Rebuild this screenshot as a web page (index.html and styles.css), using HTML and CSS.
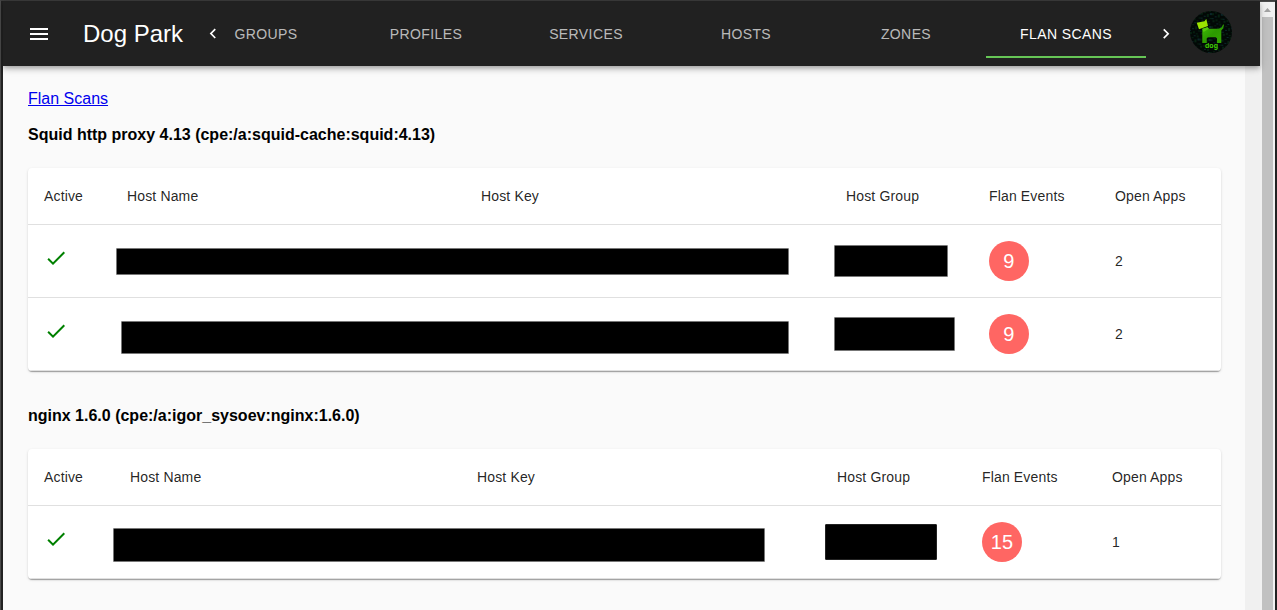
FILE: index.html
```html
<!DOCTYPE html>
<html lang="en">
<head>
<meta charset="utf-8">
<title>Dog Park</title>
<link rel="stylesheet" href="styles.css">
</head>
<body>
<div class="window">
  <div class="page">
    <header class="appbar">
      <svg class="menu" viewBox="0 0 24 24"><path d="M3 18h18v-2H3v2zm0-5h18v-2H3v2zm0-7v2h18V6H3z"/></svg>
      <h1 class="title">Dog Park</h1>
      <svg class="arrow arrow-left" viewBox="0 0 24 24"><path d="M15.41 16.09l-4.58-4.59 4.58-4.59L14 5.5l-6 6 6 6z"/></svg>
      <nav class="tabs">
        <a class="tab">GROUPS</a>
        <a class="tab">PROFILES</a>
        <a class="tab">SERVICES</a>
        <a class="tab">HOSTS</a>
        <a class="tab">ZONES</a>
        <a class="tab selected">FLAN SCANS</a>
      </nav>
      <svg class="arrow arrow-right" viewBox="0 0 24 24"><path d="M8.59 16.34l4.58-4.59-4.58-4.59L10 5.75l6 6-6 6z"/></svg>
      <svg class="avatar" viewBox="0 0 42 42">
        <defs>
          <pattern id="rain" width="11" height="13" patternUnits="userSpaceOnUse" patternTransform="rotate(3)">
            <path d="M1 1v2M4 0v1M7 2v3M10 6v1M2 8v2M8 9v1" stroke="#0a3c1c"/>
            <path d="M4 4v1M1 6v1M6 11v1M10 1v2" stroke="#14444f"/>
            <path d="M5 7v2M9 11v2" stroke="#073315"/>
          </pattern>
          <linearGradient id="coat" x1="0" y1="0" x2="1" y2="1"><stop offset="0" stop-color="#43bd08"/><stop offset=".5" stop-color="#2c9a00"/><stop offset="1" stop-color="#36a800"/></linearGradient>
        </defs>
        <circle cx="21" cy="21" r="21" fill="#020806"/>
        <circle cx="21" cy="21" r="21" fill="url(#rain)"/>
        <path d="M12.300 17.700H28.500L31.500 16.500 33.200 13.300 34 14 33 17.500 31.300 19.500V32H27V27.500L25.800 26.300H18L16.700 27.500V32H12.300z" fill="url(#coat)"/>
        <path d="M12.300 17.700L17.500 16 19 17.700 13.500 21z" fill="#54c80c"/>
        <path d="M6.700 11.700L14.500 10.300 16.300 8 18 15 9 18.300z" fill="#9be400"/>
        <text class="logo-text" x="21.500" y="36.500">dog</text>
      </svg>
    </header>
    <main class="content">
      <a class="crumb" href="#">Flan Scans</a>
      <h2 class="heading">Squid http proxy 4.13 (cpe:/a:squid-cache:squid:4.13)</h2>
      <section class="card squid">
        <div class="row head">
          <div>Active</div><div>Host Name</div><div>Host Key</div><div>Host Group</div><div>Flan Events</div><div>Open Apps</div>
        </div>
        <div class="row">
          <div><svg class="check" viewBox="0 0 24 24"><path d="M9 16.170L4.830 12l-1.420 1.410L9 19 21 7l-1.410-1.410z"/></svg></div>
          <div class="wide"><span class="mask host-a"></span></div>
          <div class="group"><span class="mask group-a"></span></div>
          <div><span class="badge">9</span></div>
          <div>2</div>
        </div>
        <div class="row">
          <div><svg class="check" viewBox="0 0 24 24"><path d="M9 16.170L4.830 12l-1.420 1.410L9 19 21 7l-1.410-1.410z"/></svg></div>
          <div class="wide"><span class="mask host-b"></span></div>
          <div class="group"><span class="mask group-b"></span></div>
          <div><span class="badge">9</span></div>
          <div>2</div>
        </div>
      </section>
      <h2 class="heading second">nginx 1.6.0 (cpe:/a:igor_sysoev:nginx:1.6.0)</h2>
      <section class="card nginx">
        <div class="row head">
          <div>Active</div><div>Host Name</div><div>Host Key</div><div>Host Group</div><div>Flan Events</div><div>Open Apps</div>
        </div>
        <div class="row">
          <div><svg class="check" viewBox="0 0 24 24"><path d="M9 16.170L4.830 12l-1.420 1.410L9 19 21 7l-1.410-1.410z"/></svg></div>
          <div class="wide"><span class="mask host-c"></span></div>
          <div class="group"><span class="mask group-c"></span></div>
          <div><span class="badge">15</span></div>
          <div>1</div>
        </div>
      </section>
    </main>
  </div>
  <div class="scrollbar">
    <svg class="up" viewBox="0 0 15 15"><path d="M4 10l3.500-4L11 10z"/></svg>
    <div class="thumb"></div>
  </div>
</div>
</body>
</html>
```
FILE: styles.css
```css
* { box-sizing: border-box; }
body {
  margin: 0;
  height: 610px;
  overflow: hidden;
  font-family: "Liberation Sans", Arial, sans-serif;
  background: #222;
}
.window {
  display: flex;
  height: 610px;
  border-top: 1px solid #3c3c3c;
  border-left: 1px solid #4a4a4a;
  border-right: 2px solid #222;
  padding-left: 2px;
}
.page {
  display: flex;
  flex-direction: column;
  width: 1257px;
  background: #f0f0f0;
}
.appbar {
  display: flex;
  align-items: flex-start;
  height: 65px;
  flex: none;
  background: #212121;
  color: #fff;
  z-index: 1;
  box-shadow: 0 2px 4px -1px rgba(0,0,0,.2), 0 4px 5px 0 rgba(0,0,0,.14), 0 1px 10px 0 rgba(0,0,0,.12);
}
.appbar svg { flex: none; fill: #fff; }
.menu { width: 24px; height: 24px; margin: 21px 0 0 24px; }
.title {
  width: 120px;
  margin: 16px 0 0 32px;
  font-size: 24px;
  line-height: 33px;
  font-weight: 400;
  white-space: nowrap;
}
.arrow { width: 20px; height: 20px; margin-top: 23px; }
.arrow-left { margin-right: -37px; }
.tabs { display: flex; margin-top: 9px; }
.tab {
  width: 160px;
  height: 48px;
  line-height: 48px;
  text-align: center;
  font-size: 14px;
  letter-spacing: .4px;
  color: rgba(255,255,255,.7);
}
.selected { color: #fff; border-bottom: 2px solid #66c656; }
.arrow-right { margin-left: 10px; }
.appbar .avatar { width: 42px; height: 42px; margin: 10px 0 0 14px; }
.logo-text { font-size: 7px; font-weight: 700; fill: #43d800; text-anchor: middle; }
.content {
  flex: 1;
  width: 1242px;
  padding: 24px 24px 0 25px;
  background: #fafafa;
}
.crumb { display: block; width: max-content; font-size: 16px; line-height: 18px; color: #0000ee; }
.heading { margin: 18px 0 24px; font-size: 16px; line-height: 18px; color: #000; }
.heading.second { margin: 36px 0 24px; }
.card {
  background: #fff;
  border-radius: 4px;
  overflow: hidden;
  font-size: 14px;
  letter-spacing: .15px;
  color: rgba(0,0,0,.87);
  box-shadow: 0 2px 1px -1px rgba(0,0,0,.2), 0 1px 1px 0 rgba(0,0,0,.14), 0 1px 3px 0 rgba(0,0,0,.12);
}
.row { display: grid; align-items: center; height: 73px; border-bottom: 1px solid #e0e0e0; }
.row.head { height: 57px; }
.squid .row { grid-template-columns: 83px 354px 365px 143px 126px 122px; }
.nginx .row { grid-template-columns: 86px 347px 360px 145px 130px 125px; }
.row > div { padding-left: 16px; }
.row > .wide { grid-column: span 2; padding: 0; }
.row > .group { padding: 0; }
.check { display: block; width: 24px; height: 24px; margin-bottom: 6px; fill: #008000; }
.badge {
  display: block;
  width: 40px;
  height: 40px;
  border-radius: 50%;
  background: #ff6663;
  color: #fff;
  font-size: 20px;
  line-height: 40px;
  text-align: center;
}
.mask { display: block; background: #000; border: 1px solid #777; border-radius: 1px; }
.host-a { width: 673px; height: 27px; margin: 1px 0 0 5px; }
.group-a { width: 114px; height: 32px; margin-left: 4px; }
.host-b { width: 668px; height: 33px; margin: 7px 0 0 10px; }
.group-b { width: 121px; height: 34px; margin-left: 4px; }
.host-c { width: 652px; height: 34px; margin: 6px 0 0 -1px; }
.group-c { width: 112px; height: 36px; margin-left: 4px; border-color: #222; }
.scrollbar {
  display: flex;
  flex-direction: column;
  align-items: center;
  width: 15px;
  border-top: 1px solid #4a4a4a;
  background: #f1f1f1;
}
.up { width: 15px; height: 15px; fill: #a3a3a3; }
.thumb { width: 11px; flex: 1; background: #c1c1c1; }
```
